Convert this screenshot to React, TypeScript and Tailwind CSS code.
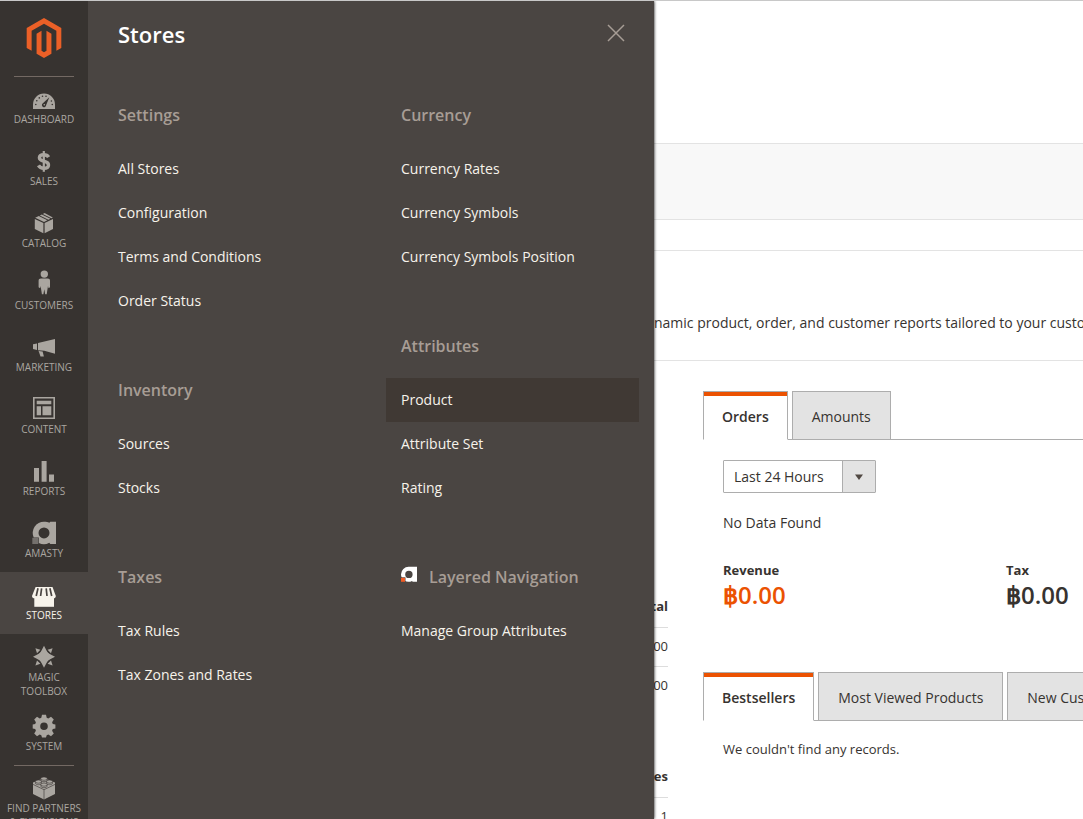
import { useState, type ReactNode } from "react";

type NavItem = { label: string; icon: ReactNode; separated?: boolean };
type Group = { title: string; branded?: boolean; links: string[] };

const navItems: NavItem[] = [
  {
    label: "Dashboard",
    separated: true,
    icon: (
      <>
        <path d="M3 25v-4.5a11 11 0 0 1 22 0V25z" />
        <g fill="#373330">
          <circle cx="5.8" cy="20.5" r=".8" />
          <circle cx="6.8" cy="16.8" r=".8" />
          <circle cx="9.3" cy="13.9" r=".8" />
          <circle cx="12.5" cy="12.3" r=".8" />
          <circle cx="16" cy="12.3" r=".8" />
          <circle cx="21.4" cy="17" r=".8" />
          <circle cx="22.3" cy="20.5" r=".8" />
          <path d="M19.3 13.3l-3.2 8a2.1 2.1 0 1 1-3.5-1.8z" />
        </g>
        <circle cx="14.3" cy="20.8" r=".8" />
      </>
    ),
  },
  {
    label: "Sales",
    icon: (
      <g fill="none" stroke="currentColor" strokeWidth="3.4">
        <path d="M18.6 11.2c-1-1.7-2.6-2.4-4.8-2.4-2.6 0-4.4 1.1-4.4 3 0 2 1.8 2.7 4.4 3.3 2.9.7 4.7 1.5 4.7 3.8 0 2.1-1.9 3.3-4.7 3.3-2.4 0-4.3-.9-5.3-2.8" />
        <path strokeWidth="2.2" d="M13.8 5v20.8" />
      </g>
    ),
  },
  {
    label: "Catalog",
    icon: (
      <>
        <path d="M4.8 10.9l8.6 4.2v10.2l-8.6-4.3z" />
        <path d="M23 10.9l-8.4 4.2v10.2l8.4-4.3z" />
        <path d="M5.2 9.8l3.6-1.9 8.6 4.3-3.4 1.7z" />
        <path d="M9.8 7.4l2-1 8.6 4.3-2 1z" />
        <path d="M12.8 5.9l1.8-1 8.2 4.5-1.4.8z" />
      </>
    ),
  },
  {
    label: "Customers",
    icon: (
      <>
        <circle cx="14.3" cy="4.1" r="3.7" />
        <path d="M11 8.5h6.7c1.500 0 2.300.9 2.300 2.300v6.500l-1.500.9-.5-2.200-1.300 8.300h-1.500l-.9-5-.9 5h-1.500l-1.300-8.300-.5 2.200-1.500-.9v-6.500c0-1.400.8-2.300 2.400-2.300z" />
      </>
    ),
  },
  {
    label: "Marketing",
    icon: (
      <>
        <path d="M25 7v14.7l-10.7-2.9-6.300-.5v-7.200z" />
        <path d="M3 12.2l4-.8v6.5l-4-.8z" />
        <path d="M8.6 19l4 .6 1.3 4.8h-3.4z" />
      </>
    ),
  },
  {
    label: "Content",
    icon: (
      <>
        <path fillRule="evenodd" d="M3 3h22v22H3zM4.600 4.600v18.800h18.800V4.600z" />
        <path d="M6.700 6.700h14.600v3.600H6.700zM6.700 12.200H11v9.100H6.700zM12.500 12.200h8.800v9.100h-8.800z" />
      </>
    ),
  },
  {
    label: "Reports",
    icon: <path d="M4 12h5v13.700H4zM11.600 5h5v20.700h-5zM19 18.400h5v7.300h-5z" />,
  },
  {
    label: "Amasty",
    icon: (
      <>
        <path
          fillRule="evenodd"
          d="M14.200 3.700c2 0 3.700.3 5.100 1.100l1-1.100H26V26h-5.700l-1-1.200a11 11 0 0 1-10.500.2v-5.500H3.700a11.200 11.200 0 0 1 10.500-15.800zM14 9.400a5.500 5.500 0 1 0 0 11 5.500 5.500 0 0 0 0-11z"
        />
        <path fill="#74706c" d="M2.300 19.800h6V26h-6z" />
      </>
    ),
  },
  {
    label: "Stores",
    icon: (
      <>
        <path d="M4.300 17.500h19.700v9.300H4.300z" />
        <path d="M5.600 7h16.900l3.300 9c0 1.500-1 2.300-2.400 2.300H4.600c-1.600 0-2.600-.8-2.600-2.300z" />
        <path
          stroke="#4a4542"
          strokeWidth="1.7"
          d="M8 8.300L6.200 16M11.600 8.300L10.600 16M16.200 8.300L17 16M19.900 8.300L21.700 16"
        />
      </>
    ),
  },
  {
    label: "Magic Toolbox",
    icon: (
      <>
        <path d="M14 3.800l3.800 7.200 7.200 3.800-7.200 3.800L14 25.800l-3.800-7.200L3 14.800l7.200-3.800z" />
        <path d="M14 6.800L22 14.800 14 22.800 6 14.800z" />
        <path d="M22.600 6.200l-5 1.600 3.400 3.400zM5.400 6.200l5 1.600L7 11.200zM22.600 23.400l-5-1.600 3.400-3.400zM5.400 23.400l5-1.600L7 18.400z" />
      </>
    ),
  },
  {
    label: "System",
    icon: (
      <path
        fillRule="evenodd"
        d="M12 3.700h4l.7 3.100 1.600.7 2.700-1.700 2.800 2.800-1.700 2.700.7 1.600 2.600.6v3.900l-2.600.7-.7 1.600 1.700 2.700-2.800 2.800-2.700-1.700-1.600.7-.7 2.300h-4l-.7-2.300-1.600-.7L7 25.200l-2.800-2.800 1.700-2.700-.7-1.600-2.500-.7v-3.900l2.500-.6.7-1.600-1.700-2.700L7 5.800l2.700 1.700 1.600-.7zM14 11.500a3.800 3.800 0 1 0 0 7.600 3.800 3.800 0 0 0 0-7.600z"
      />
    ),
  },
  {
    label: "Find Partners & Extensions",
    separated: true,
    icon: (
      <>
        <path d="M3 9.500l11-4.500L25 9.500V21l-11 5.500L3 21z" />
        <path fill="none" stroke="#373330" strokeWidth=".6" d="M3 11.400l11 5.300 11-5.300M14 16.700v10" />
        <g stroke="#373330" strokeWidth=".6">
          <path d="M10.800 5.500v1.700c0 2 6.400 2 6.400 0V5.500z" />
          <ellipse cx="14" cy="5.600" rx="3.200" ry="1.700" />
          <path d="M5.400 8.600v1.600c0 2 6 2 6 0V8.600z" />
          <ellipse cx="8.400" cy="8.600" rx="3" ry="1.600" />
          <path d="M16.600 8.600v1.600c0 2 6 2 6 0V8.600z" />
          <ellipse cx="19.600" cy="8.600" rx="3" ry="1.600" />
          <path d="M10.900 11.600v1.600c0 2 6.200 2 6.200 0v-1.600z" />
          <ellipse cx="14" cy="11.600" rx="3.100" ry="1.600" />
        </g>
      </>
    ),
  },
];

const columns: Group[][] = [
  [
    {
      title: "Settings",
      links: ["All Stores", "Configuration", "Terms and Conditions", "Order Status"],
    },
    { title: "Inventory", links: ["Sources", "Stocks"] },
    { title: "Taxes", links: ["Tax Rules", "Tax Zones and Rates"] },
  ],
  [
    {
      title: "Currency",
      links: ["Currency Rates", "Currency Symbols", "Currency Symbols Position"],
    },
    { title: "Attributes", links: ["Product", "Attribute Set", "Rating"] },
    { title: "Layered Navigation", branded: true, links: ["Manage Group Attributes"] },
  ],
];

function Sidebar() {
  return (
    <nav className="relative z-20 flex w-[88px] shrink-0 flex-col bg-[#373330]">
      <a href="#home" aria-label="Magento" className="flex h-[75px] shrink-0 justify-center pt-[17px]">
        <svg viewBox="0 0 24 24" className="size-10 fill-[#eb6027]">
          <path d="M12 24l-4.455-2.572v-12l2.970-1.715v12.001l1.485.902 1.485-.902V7.713l2.971 1.715v12L12 24zM22.391 6v12l-2.969 1.714V7.713L12 3.430 4.574 7.713v12.001L1.609 18V6L12 0l10.391 6z" />
        </svg>
      </a>
      {navItems.map((item) => (
        <div key={item.label} className="relative shrink-0">
          {item.separated && (
            <hr className="absolute inset-x-[14px] top-0 border-t border-[#736963]" />
          )}
          <a
            href="#menu"
            className={`flex min-h-[62px] flex-col items-center px-1 pt-2 pb-[5px] text-center text-[10px] leading-[14px] uppercase ${
              item.label === "Stores"
                ? "bg-[#4a4542] text-[#f7f3eb]"
                : "text-[#aaa6a0] hover:bg-[#4a4542]"
            }`}
          >
            <svg viewBox="0 0 28 28" className="size-7 shrink-0" fill="currentColor">
              {item.icon}
            </svg>
            {item.label}
          </a>
        </div>
      ))}
    </nav>
  );
}

function StoresMenu() {
  return (
    <section className="relative z-10 w-[566px] shrink-0 bg-[#4a4542] shadow-[0_0_3px_#000000]">
      <header className="flex items-start justify-between pt-[18px] pr-[29px] pl-[30px]">
        <h2 className="text-[22px] leading-[30px] font-semibold text-white">Stores</h2>
        <button type="button" aria-label="Close" className="cursor-pointer pt-[5px] text-[#a79d95]">
          <svg viewBox="0 0 18 18" className="size-[18px]" stroke="currentColor" strokeWidth="1.5">
            <path d="M1 1l16 16M17 1L1 17" />
          </svg>
        </button>
      </header>
      <div className="mt-[55px] grid grid-cols-2">
        {columns.map((groups, i) => (
          <div key={i} className="px-[15px]">
            {groups.map((group) => (
              <div key={group.title} className="mb-14">
                <h3 className="mb-[21px] flex px-[15px] text-base leading-[22px] font-semibold text-[#a79d95]">
                  {group.branded && (
                    <svg viewBox="0 0 16 16" className="mr-3 size-4">
                      <path
                        fill="#ffffff"
                        fillRule="evenodd"
                        d="M7.800.8h8.200V15.800h-4.300l-.7-.8a7.500 7.500 0 0 1-11-6.700A7.600 7.600 0 0 1 7.800.8zM7.900 4.700a3.700 3.700 0 1 0 0 7.400 3.700 3.700 0 0 0 0-7.400z"
                      />
                      <path fill="#4a4542" d="M0 11.300h4.500v4.500H0z" />
                      <path fill="#ef5b25" d="M0 11.800h4v4H0z" />
                    </svg>
                  )}
                  {group.title}
                </h3>
                <ul>
                  {group.links.map((link) => (
                    <li key={link}>
                      <a
                        href="#page"
                        className={`block px-[15px] text-sm leading-[44px] text-[#f7f3eb] hover:bg-[#403934] ${
                          link === "Product" ? "bg-[#403934]" : ""
                        }`}
                      >
                        {link}
                      </a>
                    </li>
                  ))}
                </ul>
              </div>
            ))}
          </div>
        ))}
      </div>
    </section>
  );
}

function Tabs({ names }: { names: string[] }) {
  const [active, setActive] = useState(names[0]);
  return (
    <div role="tablist" className="flex h-[49px] gap-1 border-b border-[#adadad]">
      {names.map((name) => (
        <button
          key={name}
          type="button"
          role="tab"
          aria-selected={name === active}
          onClick={() => setActive(name)}
          className={`h-[49px] shrink-0 cursor-pointer border border-[#adadad] pt-0.5 text-sm whitespace-nowrap ${
            name === active
              ? "border-b-white bg-white px-[18px] font-semibold shadow-[inset_0_4px_0_#eb5202]"
              : "bg-[#e3e3e3] px-[19px]"
          }`}
        >
          {name}
        </button>
      ))}
    </div>
  );
}

function Report({ heading, rows }: { heading: string; rows: string[] }) {
  return (
    <table className="w-full text-right text-[13px]">
      <thead>
        <tr className="h-10 border-b border-[#dddddd]">
          <th className="text-right font-bold">{heading}</th>
        </tr>
      </thead>
      <tbody>
        {rows.map((row, i) => (
          <tr key={i} className="h-[39px] border-b border-[#dddddd] last:border-0">
            <td>{row}</td>
          </tr>
        ))}
      </tbody>
    </table>
  );
}

function Total({ label, color }: { label: string; color: string }) {
  return (
    <li className="w-[283px] shrink-0">
      <span className="block text-[13px] leading-[18px] font-bold">{label}</span>
      <span className={`block text-2xl leading-8 font-semibold ${color}`}>
        <span className="font-extrabold">฿</span>0.00
      </span>
    </li>
  );
}

function Dashboard() {
  return (
    <main className="min-w-0 flex-1 overflow-hidden bg-white">
      <div className="mt-[142px] h-[77px] border-y border-[#e3e3e3] bg-[#f8f8f8]" />
      <div className="h-[31px] border-b border-[#e3e3e3]" />
      <p className="h-[110px] overflow-hidden border-b border-[#e3e3e3] pt-[62px] text-sm whitespace-nowrap">
        namic product, order, and customer reports tailored to your customer data.
      </p>
      <div className="flex">
        <div className="flex w-[14px] shrink-0 flex-col items-end overflow-hidden pt-[226px]">
          <div className="w-40">
            <Report heading="Total" rows={["฿0.00", "฿0.00"]} />
          </div>
          <div className="mt-[52px] w-40">
            <Report heading="Uses" rows={["1"]} />
          </div>
        </div>
        <div className="ml-[35px] min-w-0 flex-1 pt-[30px]">
          <Tabs names={["Orders", "Amounts"]} />
          <div className="pt-5 pl-5">
            <div className="relative w-[153px]">
              <select
                aria-label="Period"
                className="h-[33px] w-full appearance-none rounded-[1px] border border-[#adadad] bg-white pr-9 pl-[10px] text-sm"
              >
                <option>Last 24 Hours</option>
                <option>Last 7 Days</option>
                <option>Current Month</option>
              </select>
              <span className="pointer-events-none absolute inset-y-px right-px flex w-[33px] items-center justify-center border-l border-[#adadad] bg-[#e3e3e3]">
                <svg viewBox="0 0 8 6" className="h-[6px] w-2 fill-[#514943]">
                  <path d="M0 .5h8L4 6z" />
                </svg>
              </span>
            </div>
            <p className="mt-5 text-sm">No Data Found</p>
            <ul className="mt-7 flex">
              <Total label="Revenue" color="text-[#eb5202]" />
              <Total label="Tax" color="text-[#373330]" />
            </ul>
          </div>
          <div className="mt-[61px]">
            <Tabs names={["Bestsellers", "Most Viewed Products", "New Customers"]} />
            <p className="pt-[18px] pl-5 text-[13px] leading-5">We couldn't find any records.</p>
          </div>
        </div>
      </div>
    </main>
  );
}

export default function App() {
  return (
    <div className="flex h-screen overflow-hidden border-t border-[#c8c8c8] font-['Open_Sans',sans-serif] text-[#373330]">
      <Sidebar />
      <StoresMenu />
      <Dashboard />
    </div>
  );
}
